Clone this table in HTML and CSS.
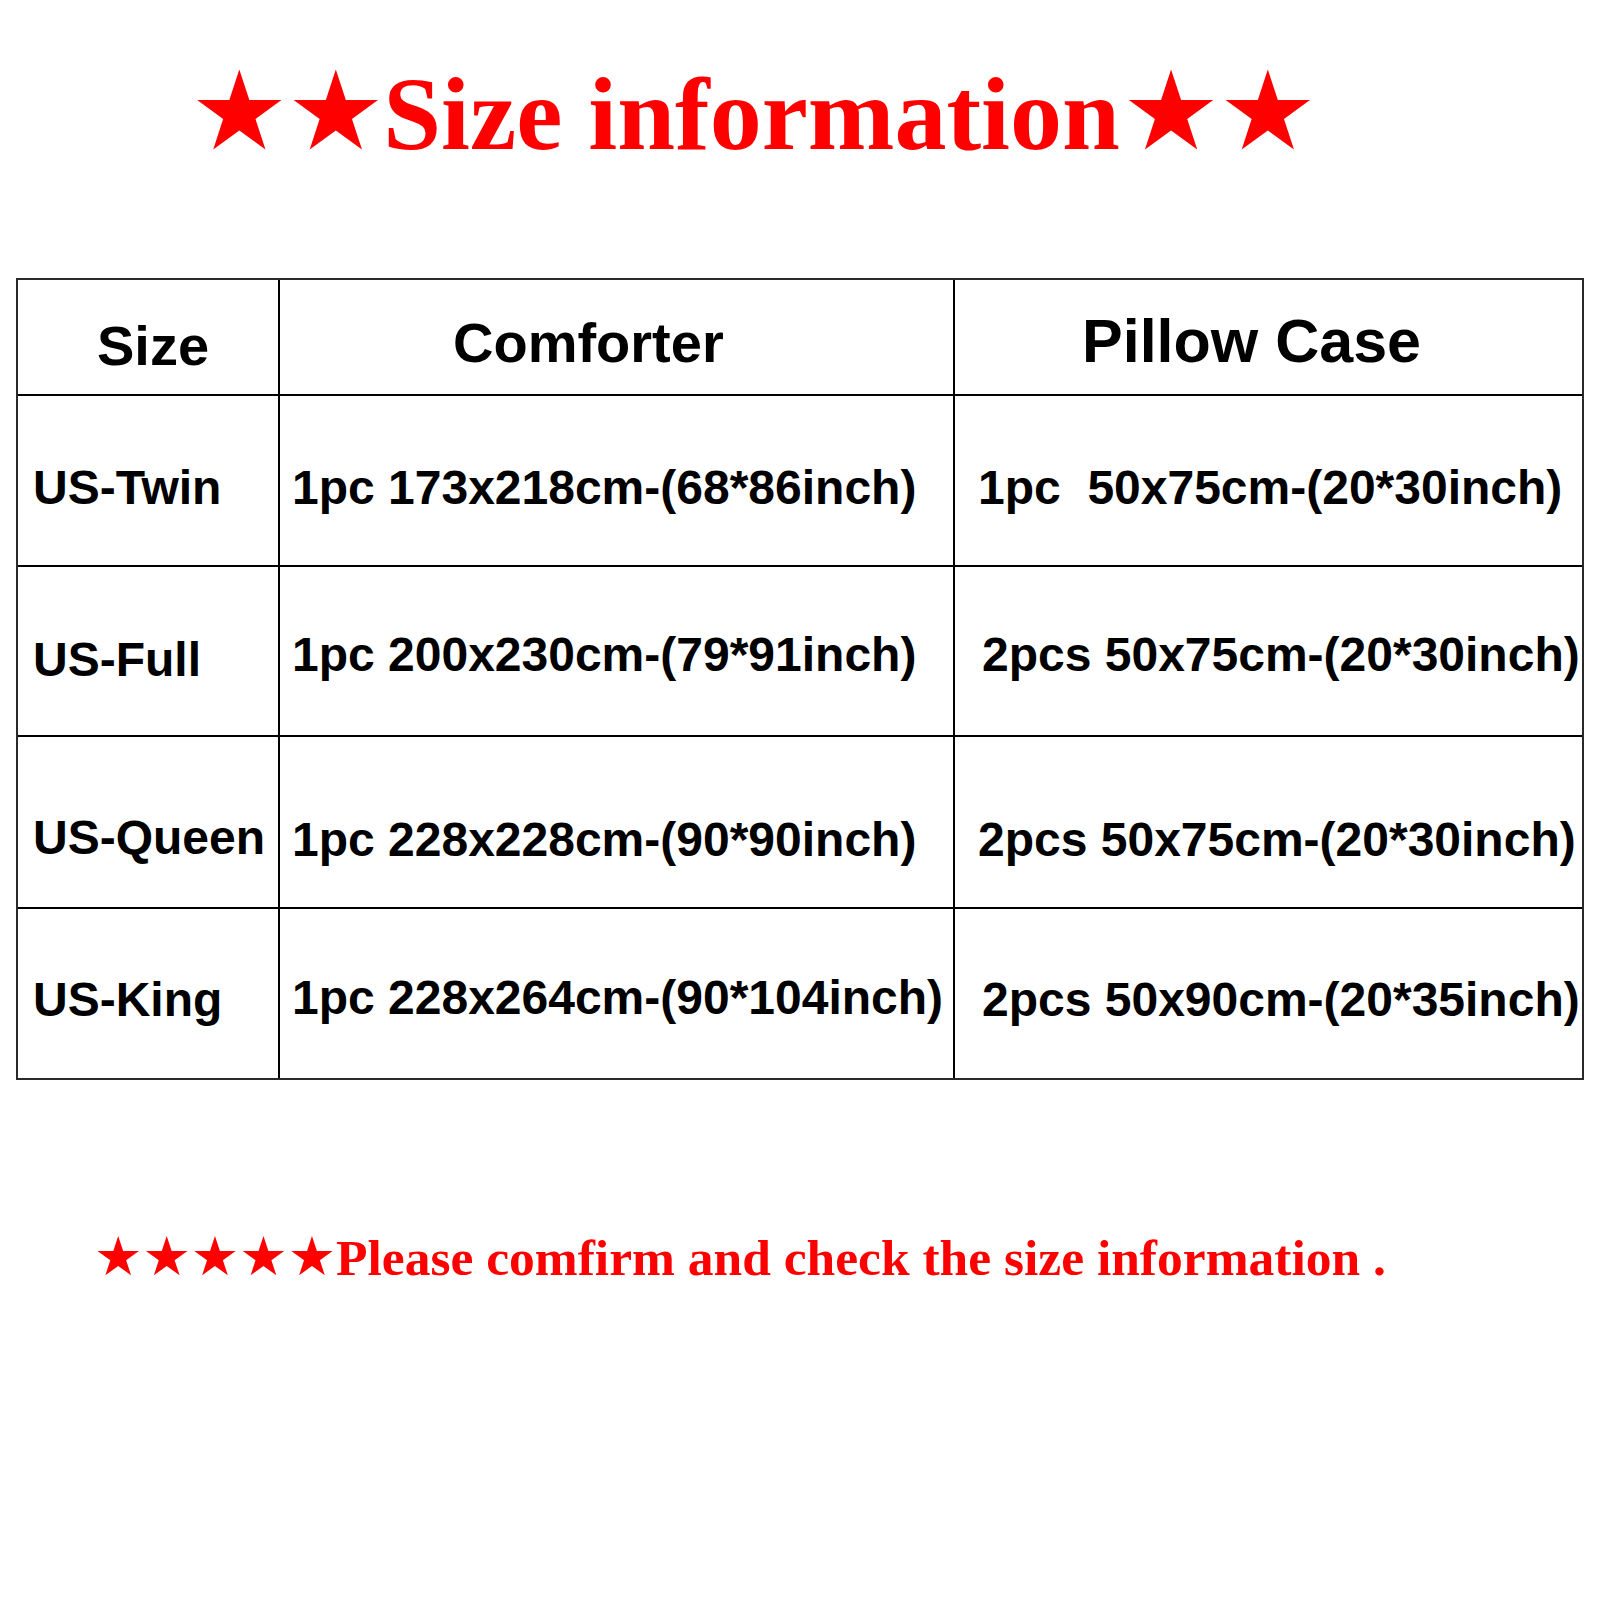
FILE: index.html
```html
<!DOCTYPE html>
<html lang="en">
<head>
<meta charset="utf-8">
<title>Size information</title>
<link rel="stylesheet" href="styles.css">
</head>
<body>
<h1 class="title"><span class="star">★★</span>Size information<span class="star star-end">★★</span></h1>

<div class="sizes">
  <div class="row row-head">
    <div class="cell c1 h-size">Size</div>
    <div class="cell c2 h-comf">Comforter</div>
    <div class="cell c3 h-pillow">Pillow Case</div>
  </div>
  <div class="row r1">
    <div class="cell c1">US-Twin</div>
    <div class="cell c2">1pc 173x218cm-(68*86inch)</div>
    <div class="cell c3">1pc  50x75cm-(20*30inch)</div>
  </div>
  <div class="row r2">
    <div class="cell c1 low">US-Full</div>
    <div class="cell c2">1pc 200x230cm-(79*91inch)</div>
    <div class="cell c3 wide">2pcs 50x75cm-(20*30inch)</div>
  </div>
  <div class="row r3">
    <div class="cell c1 high">US-Queen</div>
    <div class="cell c2">1pc 228x228cm-(90*90inch)</div>
    <div class="cell c3">2pcs 50x75cm-(20*30inch)</div>
  </div>
  <div class="row r4">
    <div class="cell c1">US-King</div>
    <div class="cell c2 high">1pc 228x264cm-(90*104inch)</div>
    <div class="cell c3 wide">2pcs 50x90cm-(20*35inch)</div>
  </div>
</div>

<p class="note"><span class="star">★★★★★</span>Please comfirm and check the size information .</p>
</body>
</html>
```

FILE: styles.css
```css
html, body {
  margin: 0;
  padding: 0;
  background: #ffffff;
}

body {
  width: 1600px;
  height: 1600px;
  overflow: hidden;
}

.title {
  margin: 0;
  padding: 62px 0 0 190px;
  height: 106px;
  font-family: "Liberation Serif", "Times New Roman", serif;
  font-weight: bold;
  font-size: 104px;
  line-height: 1;
  color: #ff0000;
  white-space: nowrap;
}

.title .star {
  font-family: "DejaVu Sans", sans-serif;
  font-weight: normal;
  font-size: 110px;
  line-height: 0;
  letter-spacing: -2px;
}

.title .star-end {
  margin-left: 2px;
}

.sizes {
  margin: 110px 0 0 16px;
  width: 1564px;
  border: 2px solid #2a2a2a;
  font-family: "Liberation Sans", Arial, sans-serif;
  font-weight: bold;
  color: #000000;
}

.row {
  display: grid;
  grid-template-columns: 262px 675px 627px;
  box-sizing: border-box;
  border-bottom: 2px solid #000000;
}

.row:last-child {
  border-bottom: none;
}

.cell {
  box-sizing: border-box;
  white-space: pre;
  font-size: 48px;
  line-height: 1;
}

.c1 {
  border-right: 2px solid #000000;
  padding-left: 15px;
}

.c2 {
  border-right: 2px solid #000000;
  padding-left: 12px;
}

.c3 {
  padding-left: 23px;
}

.c3.wide {
  padding-left: 27px;
}

.row-head { height: 116px; }
.row-head .cell { font-size: 56px; }
.h-size { padding: 38px 0 0 79px; }
.h-comf { padding: 35px 0 0 173px; }
.h-pillow { padding: 31px 0 0 127px; font-size: 61px !important; }

.r1 { height: 171px; }
.r1 .cell { padding-top: 68px; }

.r2 { height: 170px; }
.r2 .cell { padding-top: 64px; }
.r2 .cell.low { padding-top: 69px; }

.r3 { height: 172px; }
.r3 .cell { padding-top: 79px; }
.r3 .cell.high { padding-top: 77px; }

.r4 { height: 169px; }
.r4 .cell { padding-top: 67px; }
.r4 .cell.high { padding-top: 65px; }

.note {
  margin: 152px 0 0 0;
  padding-left: 94px;
  font-family: "Liberation Serif", "Times New Roman", serif;
  font-weight: bold;
  font-size: 51.5px;
  line-height: 1;
  color: #ff0000;
  white-space: nowrap;
}

.note .star {
  font-family: "DejaVu Sans", sans-serif;
  font-weight: normal;
  font-size: 54px;
  line-height: 0;
  letter-spacing: 0;
}
```
